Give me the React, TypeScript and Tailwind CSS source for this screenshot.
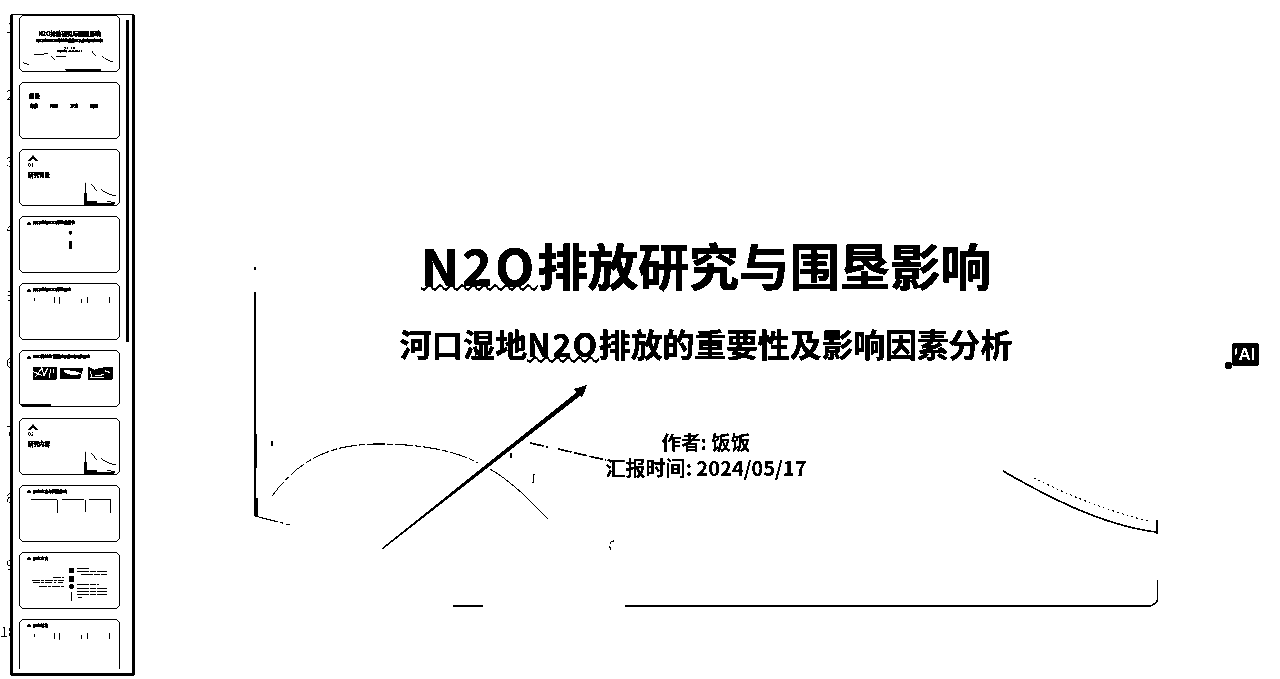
import type { ReactNode } from 'react'

const font = "font-['Noto_Sans_CJK_SC','Noto_Sans',sans-serif]"
const squiggle = 'underline decoration-wavy decoration-[1.5px] [text-decoration-skip-ink:none]'

function Thumb({ num, children }: { num: number; children: ReactNode }) {
  return (
    <div className="flex h-[57.1px] shrink-0 items-start">
      <span className="mr-[9px] w-[10px] shrink-0 overflow-hidden whitespace-nowrap pt-[2px] text-sm text-[#777]">
        <span className={num === 10 ? 'block' : 'block pl-[6px]'}>{num}</span>
      </span>
      <div className="relative h-[57px] w-[101px] shrink-0 overflow-hidden rounded-[5px] border border-black bg-white">
        {children}
      </div>
    </div>
  )
}

function ThumbTitle({ children }: { children: ReactNode }) {
  return (
    <div className="flex items-center gap-[2px] pl-[7px] pt-[3px] text-[3.8px] font-bold leading-[6px] text-black [-webkit-text-stroke:0.4px_#000]">
      <span className="h-[3px] w-[4px] rounded-t-full bg-black" />
      <span className="whitespace-nowrap">{children}</span>
    </div>
  )
}

function Sketch({ children }: { children: ReactNode }) {
  return (
    <svg viewBox="0 0 100 56" className="absolute inset-0 h-full w-full" fill="none" stroke="#000" strokeWidth="0.8">
      {children}
    </svg>
  )
}

function SectionThumb({ no, title }: { no: string; title: string }) {
  return (
    <>
      <div className="pl-[8px] pt-[5px]">
        <svg width="10" height="6" viewBox="0 0 10 6">
          <path d="M0 6 5 0l5 6H7L5 3 3 6z" fill="#000" />
        </svg>
        <div className="text-[5px] font-bold leading-[7px] text-black">{no}</div>
        <div className="mt-[4px] text-[5.5px] font-bold leading-[7px] text-black [-webkit-text-stroke:0.3px_#000]">{title}</div>
      </div>
      <Sketch>
        <path d="M66 33v22h30" strokeWidth="1" />
        <path d="M66 44v10h12" strokeWidth="3" />
        <path d="M72 34l6 8M82 40c5 4 10 6 16 7M88 52l9 2" />
      </Sketch>
    </>
  )
}

const ticks = (
  <Sketch>
    <path d="M14 14v4M35 13v7M40 13v7M62 15v5M68 13v7M91 13v7" />
  </Sketch>
)

export default function App() {
  return (
    <div className={`relative flex h-[679px] w-[1280px] overflow-hidden bg-white brightness-[.85] contrast-[100] ${font}`}>
      {/* Miniaturas */}
      <aside className="relative mt-[14px] h-[662px] w-[135px] shrink-0">
        <div className="h-[655px] overflow-hidden">
          <div className="flex flex-col gap-[10px] pt-px">
            <Thumb num={1}>
              <div className="flex flex-col items-center pt-[14px] font-bold text-black">
                <div className="text-[5.600px] leading-[8px] [-webkit-text-stroke:0.3px_#000]">N2O排放研究与围垦影响</div>
                <div className="text-[3.500px] leading-[6px] [-webkit-text-stroke:0.3px_#000]">河口湿地N2O排放的重要性及影响因素分析</div>
                <div className="mt-[3px] text-[2.500px] leading-[3px]">作者: 饭饭</div>
                <div className="text-[2.500px] leading-[3px] [-webkit-text-stroke:0.2px_#000]">汇报时间: 2024/05/17</div>
              </div>
              <Sketch>
                <path d="M14 39h8l6-1M31 40l4 5M36 41h8l4 1M72 35l5 6M83 41c4 3 8 5 12 6M2 47l7 3" />
                <path d="M46 54.500h36" strokeWidth="1.800" />
              </Sketch>
            </Thumb>
            <Thumb num={2}>
              <div className="pl-[9px] pt-[9px] text-[5.500px] font-bold leading-[8px] text-black [-webkit-text-stroke:0.3px_#000]">目录</div>
              <div className="mt-[4px] flex gap-[12px] pl-[10px] text-[4px] font-bold leading-[5px] text-black [-webkit-text-stroke:0.3px_#000]">
                <span>背景</span>
                <span>内容</span>
                <span>方法</span>
                <span>结果</span>
              </div>
            </Thumb>
            <Thumb num={3}>
              <SectionThumb no="01" title="研究背景" />
            </Thumb>
            <Thumb num={4}>
              <ThumbTitle>河口湿地N2O排放重要性</ThumbTitle>
              <Sketch>
                <circle cx="51" cy="16" r="2" fill="#000" stroke="none" />
                <path d="M51 25v7" strokeWidth="3.500" />
              </Sketch>
            </Thumb>
            <Thumb num={5}>
              <ThumbTitle>河口湿地N2O排放研究</ThumbTitle>
              {ticks}
            </Thumb>
            <Thumb num={6}>
              <ThumbTitle>N2O排放的重要性及影响因素研究</ThumbTitle>
              <Sketch>
                <path d="M13 16h24v13H13zM40 17h24l-3 11H40zM69 16l6 3 7-2 12-1v13H69z" fill="#000" stroke="none" />
                <path d="M15 27l7-10 2 8 4-8M13 21l9 4M31 18l-2 10M34 18l-1 5" stroke="#fff" strokeWidth="1.200" />
                <path d="M43 20c7-1 13 0 19 3-6 3-13 2-19-3z" fill="#fff" stroke="none" />
                <path d="M71 20l2 7M76 25c4 1 6-1 9-1M86 20l5 2M71 27h14" stroke="#fff" strokeWidth="1.200" />
                <path d="M1 55h30" strokeWidth="1.500" />
              </Sketch>
            </Thumb>
            <Thumb num={7}>
              <SectionThumb no="02" title="研究内容" />
            </Thumb>
            <Thumb num={8}>
              <ThumbTitle>研究内容与围垦影响</ThumbTitle>
              <Sketch>
                <path d="M11 14h26M42 14h23M70 14h22" />
                <path d="M38 14v13M66 14v13M92 14v13" strokeWidth="1.200" />
              </Sketch>
            </Thumb>
            <Thumb num={9}>
              <ThumbTitle>研究方法</ThumbTitle>
              <Sketch>
                <path d="M49.500 15h5v5h-5zM49.500 24h5v5h-5z" fill="#000" stroke="none" />
                <circle cx="52" cy="34" r="2.600" fill="#000" stroke="none" />
                <path d="M52 40v9" />
                <path d="M33 25h11M12 28h32M12 30.500h32M19 34h25" strokeWidth="0.900" strokeDasharray="8 1 3 1" />
                <path d="M58 16h13M58 19h30M62 22h26M58 32h22M58 36h30M58 39h30M58 42h30M58 45h5" strokeWidth="0.900" strokeDasharray="12 1 6 1" />
              </Sketch>
            </Thumb>
            <Thumb num={10}>
              <ThumbTitle>研究结果</ThumbTitle>
              {ticks}
            </Thumb>
          </div>
        </div>
        <div className="pointer-events-none absolute inset-y-0 left-[10px] right-0 rounded-[3px] border-x-[3px] border-b-[3px] border-t border-black" />
        <div className="absolute left-[126px] top-[6px] h-[322px] w-[3px] bg-black" />
      </aside>

      {/* Slide */}
      <main className="relative ml-[119px] mt-[100px] h-[508px] w-[904px] shrink-0">
        <svg viewBox="0 0 904 508" className="absolute inset-0 h-full w-full" fill="none" stroke="#000">
          <path d="M1 167v3M1 192v208" strokeWidth="1" />
          <path d="M1.500 334v34" strokeWidth="2" />
          <path d="M2 398v18" strokeWidth="3.500" />
          <path d="M1 416l35 9" strokeWidth="1" strokeDasharray="24 2 3 3" />
          <path d="M18 396C45 360 75 344 125 344C165 344 200 350 224 363" strokeWidth="1" strokeDasharray="18 2 6 2" />
          <path d="M236 369C255 380 272 396 294 419" strokeWidth="1" />
          <polygon points="128,448 328,288 331,292 129,449" fill="#000" stroke="none" />
          <polygon points="333,285 320,289 328,297" fill="#000" stroke="none" />
          <path d="M276 343l18 4M304 349l48 11" strokeWidth="1.500" strokeDasharray="14 2" />
          <path d="M18 341v5M257 353v5M280 374l-1 9" strokeWidth="1" />
          <path d="M360 441c-6 0-5 9-1 11" strokeWidth="1" strokeDasharray="5 2" />
          <path d="M749 371C785 392 845 425 902 432" strokeWidth="1.500" />
          <path d="M780 378C812 394 850 410 894 421" strokeWidth="1" strokeDasharray="2 3" />
          <path d="M903 420v14" strokeWidth="2" />
          <path d="M904 480v16c0 7-5 10-10 10" strokeWidth="1.500" />
          <path d="M199 506h30" strokeWidth="1" />
          <path d="M371 506h380" strokeWidth="2" />
          <path d="M751 506h145" strokeWidth="1" />
        </svg>
        <div className="relative flex flex-col items-center font-bold text-black">
          <h1 className="mt-[135px] whitespace-nowrap text-[50.400px] leading-[60px] [-webkit-text-stroke:0.6px_#000]">
            <span className={`${squiggle} tracking-[3.400px] underline-offset-[-2px]`}>N2O</span>排放研究与围垦影响
          </h1>
          <h2 className="mt-[26px] whitespace-nowrap text-[31.800px] leading-[44px] [-webkit-text-stroke:0.3px_#000]">
            河口湿地<span className={`${squiggle} tracking-[1.600px] underline-offset-[-1px]`}>N2O</span>排放的重要性及影响因素分析
          </h2>
          <p className="mt-[63px] text-[19.500px] leading-[27px]">作者: 饭饭</p>
          <p className="text-[20px] leading-[26px]">汇报时间: 2024/05/17</p>
        </div>
      </main>

      {/* Botão AI */}
      <div className="absolute left-[1232px] top-[343px] flex h-[23px] w-[27px] items-center justify-center rounded-[3px] bg-black pl-[3px] font-['Liberation_Sans',sans-serif] text-[17px] font-bold leading-none text-white">
        AI
        <span className="absolute left-[3px] top-[5px] h-[7px] w-[2px] rotate-12 bg-white" />
      </div>
      <div className="absolute left-[1225px] top-[362px] h-[7px] w-[7px] rounded-full bg-black" />
    </div>
  )
}
